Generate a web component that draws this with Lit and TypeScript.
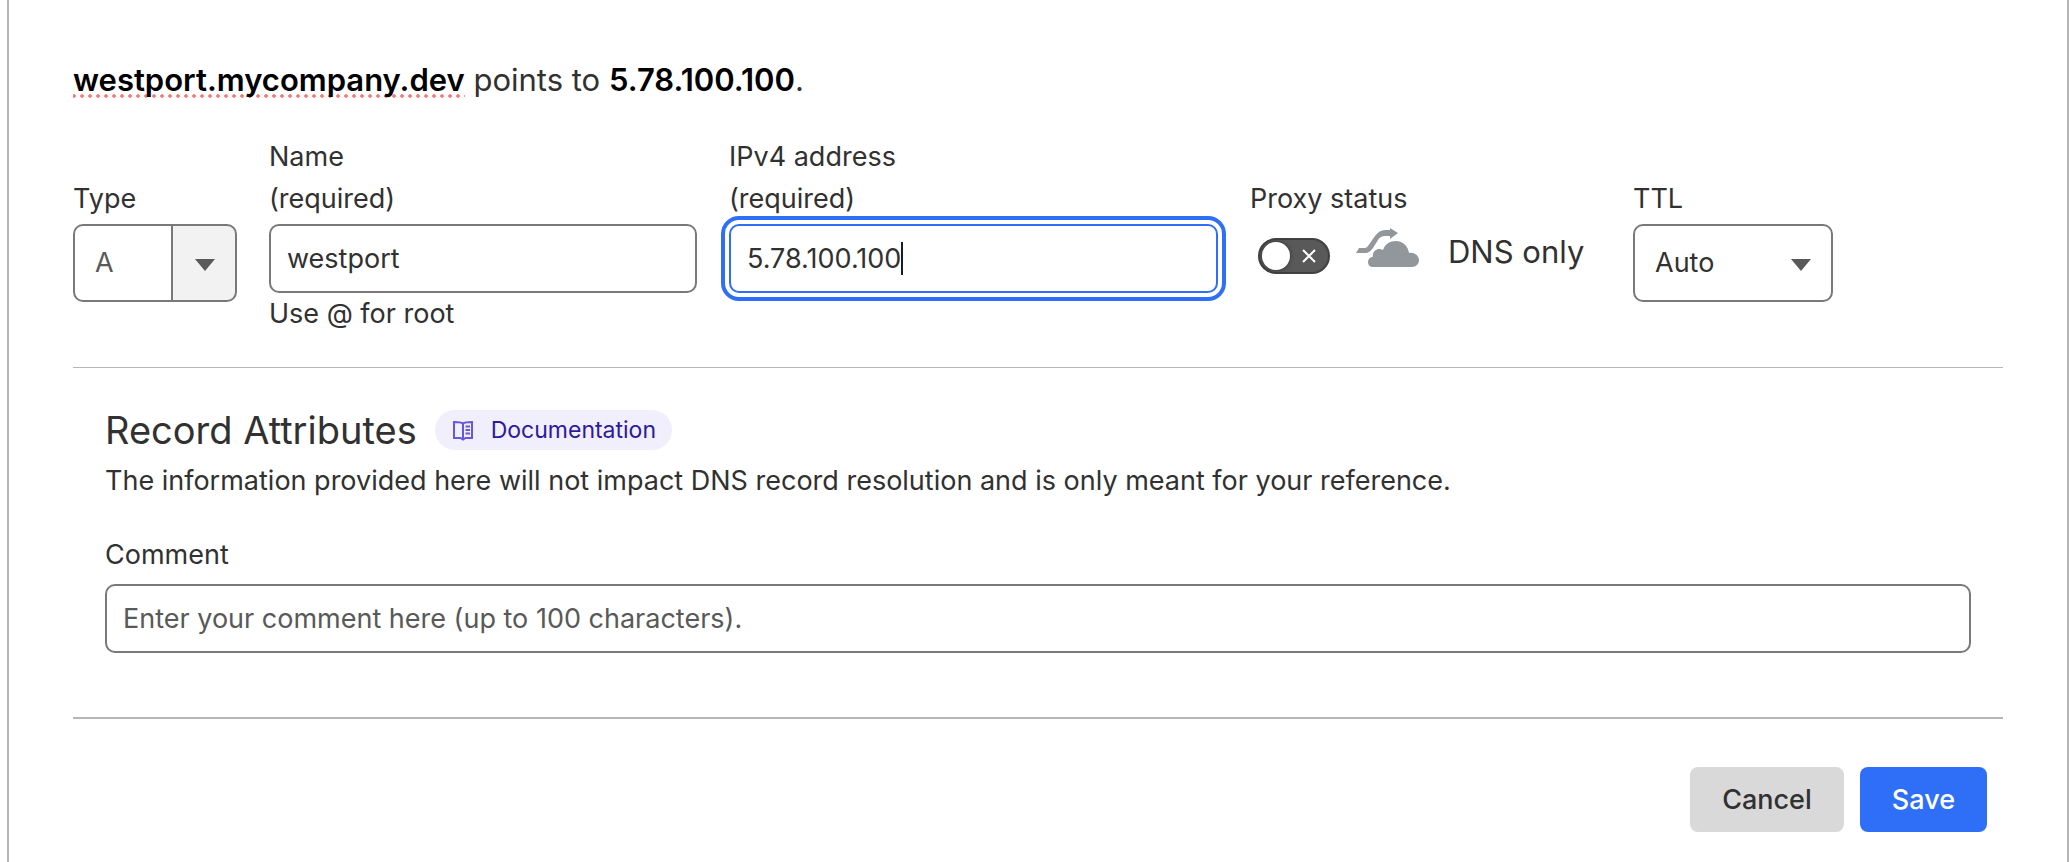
import { LitElement, html, css } from "lit";
import { customElement, state, query } from "lit/decorators.js";
import { classMap } from "lit/directives/class-map.js";

const FONT = '"Inter", "Liberation Sans", sans-serif';

@customElement("app-root")
export class AppRoot extends LitElement {
  static styles = css`
    :host {
      display: block;
      min-height: 100vh;
      box-sizing: border-box;
      padding: 0 3px 0 7px;
      background: #fff;
      color: #313131;
      font: 400 27px/42px "Inter", "Liberation Sans", sans-serif;
    }
    *, *::before, *::after { box-sizing: border-box; }
    .card {
      min-height: 100vh;
      padding: 56px 64px 24px;
      border: solid #b6b6b6;
      border-width: 0 2px;
    }
    .summary { margin: 0 0 32px; font-size: 31px; line-height: 48px; }
    .summary strong { font-weight: 600; color: #000; }
    .spell {
      background: radial-gradient(circle, #f8766d 1px, #f8766d99 2px, transparent 2px) -3px bottom / 8px 4px repeat-x;
    }
    .fields {
      display: grid;
      grid-template-columns: 164px 428fr 489fr 351px 200px 138fr;
      grid-template-rows: auto auto auto;
      column-gap: 32px;
      padding-bottom: 32px;
      border-bottom: 1px solid #b6b6b6;
    }
    .field {
      display: grid;
      grid-row: 1 / 4;
      grid-template-rows: subgrid;
      align-items: start;
    }
    .label { display: block; align-self: end; padding-bottom: 4px; }
    .label span { display: block; }
    .input {
      display: block;
      width: 100%;
      height: 69px;
      padding: 0 16px;
      border: 2px solid #797979;
      border-radius: 10px;
      background: #fff;
      color: #313131;
      font: inherit;
      outline: none;
    }
    .input::placeholder { color: #595959; opacity: 1; }
    .input.active {
      border-color: #2f6ff7;
      outline: 4px solid #2f6ff7;
      outline-offset: 4px;
      caret-color: transparent;
    }
    .control { position: relative; grid-row: 2 / 4; }
    .caret {
      position: absolute;
      top: 18px;
      width: 2px;
      height: 33px;
      background: #1d1d1d;
    }
    .hint { grid-row: 3; margin: 0; }
    .control.short { grid-row: 2; }
    .select {
      display: block;
      appearance: none;
      width: 100%;
      height: 78px;
      padding: 0 20px;
      border: 2px solid #797979;
      border-radius: 10px;
      background: #fff;
      color: #313131;
      font: inherit;
    }
    .select.type {
      color: #595959;
      background: linear-gradient(to left, #f2f2f2 62px, #797979 62px, #797979 64px, #fff 64px);
    }
    .arrow {
      position: absolute;
      right: 22px;
      top: 35px;
      width: 20px;
      height: 12px;
      fill: #595959;
      pointer-events: none;
    }
    .proxy { display: flex; align-items: flex-start; padding-left: 8px; }
    .switch {
      appearance: none;
      position: relative;
      flex: none;
      width: 72px;
      height: 36px;
      margin: 14px 26px 0 0;
      border: 2px solid #414141;
      border-radius: 18px;
      background: #595959;
    }
    .switch::before {
      content: "";
      position: absolute;
      left: 2px;
      top: 2px;
      width: 28px;
      height: 28px;
      border-radius: 50%;
      background: #fff;
      box-shadow: 0 0 4px #313131;
    }
    .toggle { position: relative; display: flex; }
    .cross {
      position: absolute;
      left: 44px;
      top: 25px;
      width: 14px;
      height: 14px;
      stroke: #fff;
      stroke-width: 2;
      pointer-events: none;
    }
    .cloud { flex: none; width: 64px; height: 40px; margin: 4px 28px 0 0; fill: #92979b; }
    .status { font-size: 31px; line-height: 56px; }
    .attributes { padding: 32px 32px 64px; border-bottom: 2px solid #b6b6b6; }
    .heading { display: flex; align-items: center; gap: 18px; }
    h2 { margin: 0; font-size: 38px; line-height: 60px; font-weight: 400; }
    .docs {
      display: inline-flex;
      align-items: center;
      gap: 16px;
      height: 40px;
      padding: 0 16px;
      border-radius: 20px;
      background: #f1effb;
      color: #2b1a9e;
      font-size: 23px;
      text-decoration: none;
    }
    .book { width: 24px; height: 24px; fill: none; stroke: #6558dc; stroke-width: 2; }
    .about { margin: 0 0 32px; }
    .attributes .label { padding-bottom: 8px; }
    .actions { display: flex; justify-content: flex-end; gap: 16px; padding: 48px 16px 0; }
    .button {
      height: 65px;
      padding: 0 32px;
      border: 0;
      border-radius: 8px;
      background: #d9d9d9;
      color: #313131;
      font: inherit;
      font-weight: 500;
    }
    .button.primary { background: #2f6ff7; color: #fff; }
  `;

  @state() private name = "westport";
  @state() private address = "5.78.100.100";
  @state() private comment = "";
  @state() private active = "address";
  @state() private caretX = 0;
  @query("#address") private addressInput!: HTMLInputElement;

  private placeCaret() {
    const style = getComputedStyle(this.addressInput);
    const context = document.createElement("canvas").getContext("2d")!;
    context.font = `${style.fontSize} ${FONT}`;
    const inset = parseFloat(style.paddingLeft) + parseFloat(style.borderLeftWidth);
    this.caretX = Math.round(inset + context.measureText(this.address).width);
  }

  protected firstUpdated() {
    this.placeCaret();
    document.fonts.ready.then(() => this.placeCaret());
  }

  private arrow() {
    return html`<svg class="arrow" viewBox="0 0 20 12" aria-hidden="true"><path d="M0 0h20L10 12z" /></svg>`;
  }

  private inputClass(id: string) {
    return classMap({ input: true, active: this.active === id });
  }

  render() {
    return html`
      <main class="card">
        <p class="summary">
          <strong class="spell">${this.name}.mycompany.dev</strong> points to <strong>${this.address}</strong>.
        </p>
        <div class="fields">
          <div class="field">
            <label class="label" for="type">Type</label>
            <div class="control">
              <select class="select type" id="type"><option>A</option></select>
              ${this.arrow()}
            </div>
          </div>
          <div class="field">
            <label class="label" for="name"><span>Name</span><span>(required)</span></label>
            <div class="control short">
              <input class=${this.inputClass("name")} id="name" .value=${this.name}
                @focus=${() => (this.active = "name")}
                @input=${(e: Event) => (this.name = (e.target as HTMLInputElement).value)} />
            </div>
            <p class="hint">Use @ for root</p>
          </div>
          <div class="field">
            <label class="label" for="address"><span>IPv4 address</span><span>(required)</span></label>
            <div class="control">
              <input class=${this.inputClass("address")} id="address" .value=${this.address}
                @focus=${() => (this.active = "address")}
                @input=${(e: Event) => {
                  this.address = (e.target as HTMLInputElement).value;
                  this.placeCaret();
                }} />
              ${this.active === "address"
                ? html`<span class="caret" style="left:${this.caretX}px"></span>`
                : null}
            </div>
          </div>
          <div class="field">
            <label class="label" for="proxy">Proxy status</label>
            <div class="control proxy">
              <span class="toggle">
                <input class="switch" id="proxy" type="checkbox" role="switch" />
                <svg class="cross" viewBox="0 0 14 14" aria-hidden="true"><path d="M1 1l12 12M13 1L1 13" /></svg>
              </span>
              <svg class="cloud" viewBox="0 0 64 40" aria-hidden="true">
                <path d="M0 25L3 20H9C10 20 11 19 12 18L19 8C22 4 25 2 29 2H34V0L42 5L34 11V8H29C26 8 24 9 22 12L17 20C14 24 12 25 9 25Z" />
                <path d="M17 39C14 39 12 37 12 34C12 31 14 29 17 28.500C16 23 22 19 27 22C29 16 34 13 40 13C47 13 52 18 53 25C59 24 63 28 63 32C63 36 60 39 56 39Z" />
              </svg>
              <span class="status">DNS only</span>
            </div>
          </div>
          <div class="field">
            <label class="label" for="ttl">TTL</label>
            <div class="control">
              <select class="select" id="ttl"><option>Auto</option></select>
              ${this.arrow()}
            </div>
          </div>
        </div>
        <section class="attributes">
          <div class="heading">
            <h2>Record Attributes</h2>
            <a class="docs" href="#documentation">
              <svg class="book" viewBox="0 0 24 24" aria-hidden="true">
                <path d="M12 5.500C10 4 8 4 3 4V20H9.500L12 21.500L14.500 20H21V4C16 4 14 4 12 5.500V21M14.500 8.500H19M14.500 12H19M14.500 15.500H19" />
              </svg>
              Documentation
            </a>
          </div>
          <p class="about">The information provided here will not impact DNS record resolution and is only meant for your reference.</p>
          <label class="label" for="comment">Comment</label>
          <input class=${this.inputClass("comment")} id="comment" maxlength="100" .value=${this.comment}
            placeholder="Enter your comment here (up to 100 characters)."
            @focus=${() => (this.active = "comment")} />
        </section>
        <div class="actions">
          <button class="button" type="button">Cancel</button>
          <button class="button primary" type="submit">Save</button>
        </div>
      </main>
    `;
  }
}
